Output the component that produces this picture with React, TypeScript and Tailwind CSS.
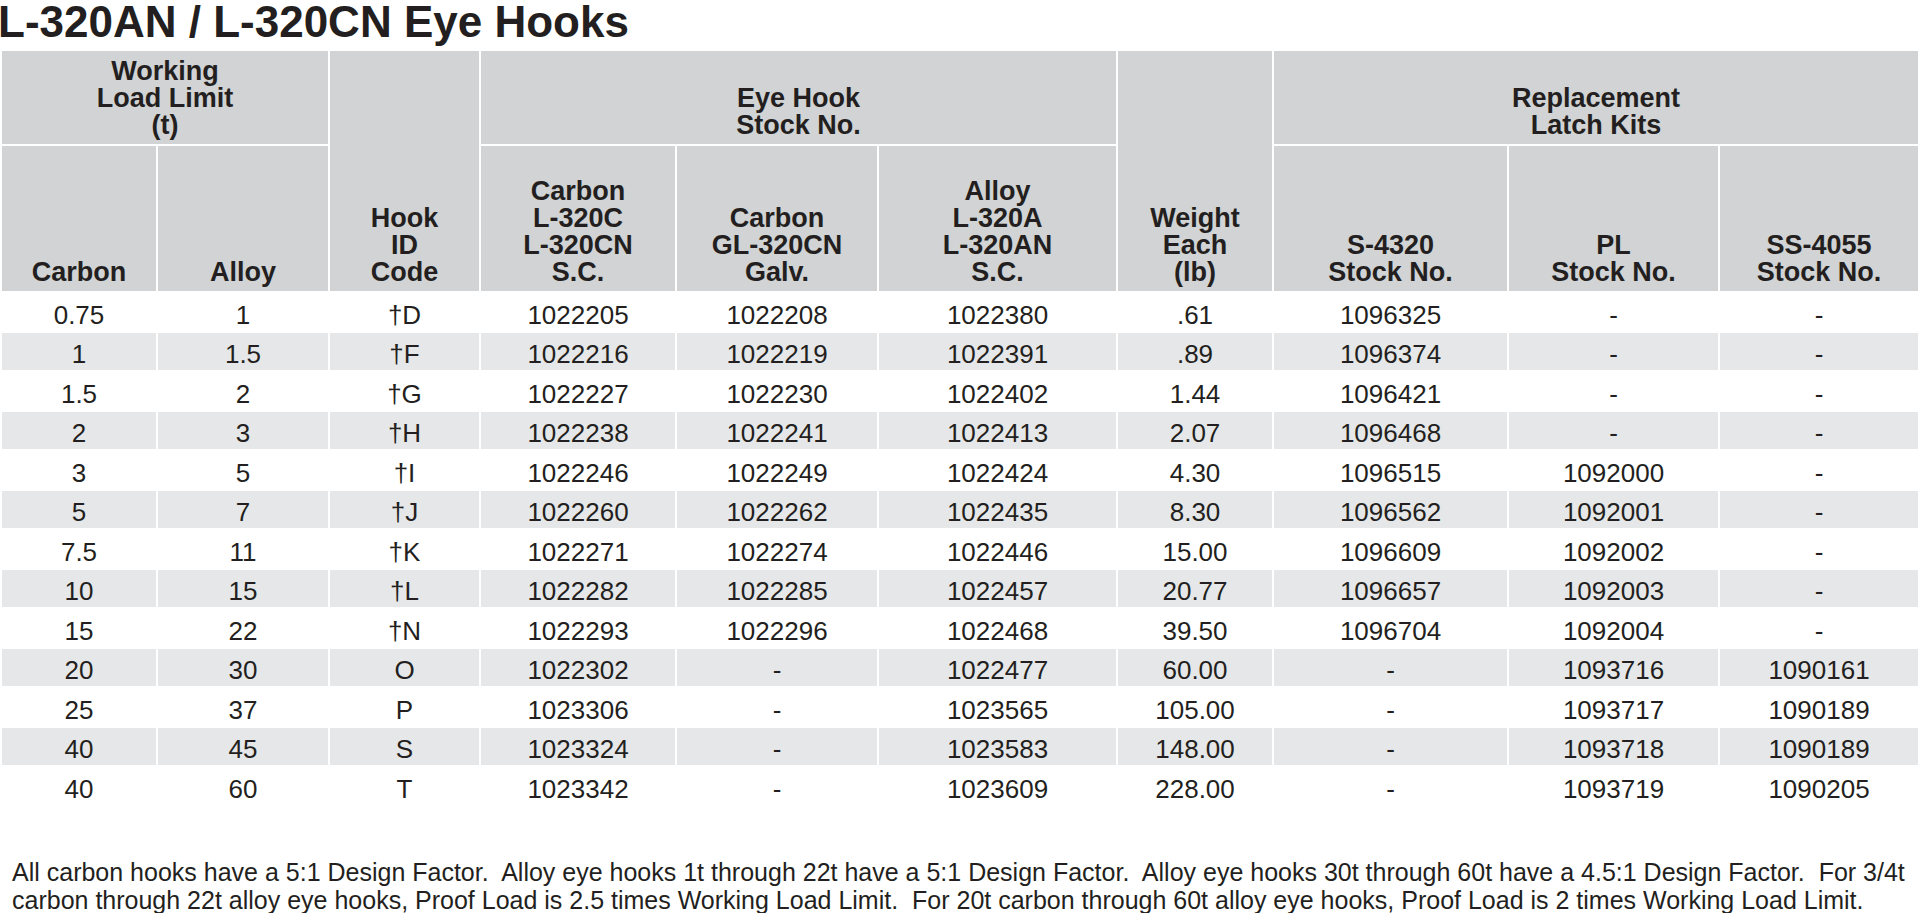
const rows: string[][] = [
  ["0.75", "1", "†D", "1022205", "1022208", "1022380", ".61", "1096325", "-", "-"],
  ["1", "1.5", "†F", "1022216", "1022219", "1022391", ".89", "1096374", "-", "-"],
  ["1.5", "2", "†G", "1022227", "1022230", "1022402", "1.44", "1096421", "-", "-"],
  ["2", "3", "†H", "1022238", "1022241", "1022413", "2.07", "1096468", "-", "-"],
  ["3", "5", "†I", "1022246", "1022249", "1022424", "4.30", "1096515", "1092000", "-"],
  ["5", "7", "†J", "1022260", "1022262", "1022435", "8.30", "1096562", "1092001", "-"],
  ["7.5", "11", "†K", "1022271", "1022274", "1022446", "15.00", "1096609", "1092002", "-"],
  ["10", "15", "†L", "1022282", "1022285", "1022457", "20.77", "1096657", "1092003", "-"],
  ["15", "22", "†N", "1022293", "1022296", "1022468", "39.50", "1096704", "1092004", "-"],
  ["20", "30", "O", "1022302", "-", "1022477", "60.00", "-", "1093716", "1090161"],
  ["25", "37", "P", "1023306", "-", "1023565", "105.00", "-", "1093717", "1090189"],
  ["40", "45", "S", "1023324", "-", "1023583", "148.00", "-", "1093718", "1090189"],
  ["40", "60", "T", "1023342", "-", "1023609", "228.00", "-", "1093719", "1090205"],
];

const th = "bg-[#d1d3d4] font-bold text-[27px] leading-[27px] text-center align-bottom pb-[5px] px-0";

function Lines({ items }: { items: string[] }) {
  return (
    <>
      {items.map((t) => (
        <div key={t}>{t}</div>
      ))}
    </>
  );
}

export default function App() {
  return (
    <div className="w-[1920px] h-[913px] bg-white text-[#231f20] font-['Liberation_Sans',Arial,sans-serif] overflow-hidden">
      <h1 className="text-[44px] leading-[43px] font-bold -ml-[2px] whitespace-nowrap">
        L-320AN / L-320CN Eye Hooks
      </h1>

      <table className="mt-[6px] w-[1920px] table-fixed border-separate border-spacing-[2px]">
        <colgroup>
          <col className="w-[154px]" />
          <col className="w-[170px]" />
          <col className="w-[149px]" />
          <col className="w-[194px]" />
          <col className="w-[200px]" />
          <col className="w-[237px]" />
          <col className="w-[154px]" />
          <col className="w-[233px]" />
          <col className="w-[209px]" />
          <col className="w-[198px]" />
        </colgroup>
        <thead>
          <tr className="h-[93px]">
            <th colSpan={2} className={th}>
              <Lines items={["Working", "Load Limit", "(t)"]} />
            </th>
            <th rowSpan={2} className={th}>
              <Lines items={["Hook", "ID", "Code"]} />
            </th>
            <th colSpan={3} className={th}>
              <Lines items={["Eye Hook", "Stock No."]} />
            </th>
            <th rowSpan={2} className={th}>
              <Lines items={["Weight", "Each", "(lb)"]} />
            </th>
            <th colSpan={3} className={th}>
              <Lines items={["Replacement", "Latch Kits"]} />
            </th>
          </tr>
          <tr className="h-[145px]">
            <th className={th}>Carbon</th>
            <th className={th}>Alloy</th>
            <th className={th}>
              <Lines items={["Carbon", "L-320C", "L-320CN", "S.C."]} />
            </th>
            <th className={th}>
              <Lines items={["Carbon", "GL-320CN", "Galv."]} />
            </th>
            <th className={th}>
              <Lines items={["Alloy", "L-320A", "L-320AN", "S.C."]} />
            </th>
            <th className={th}>
              <Lines items={["S-4320", "Stock No."]} />
            </th>
            <th className={th}>
              <Lines items={["PL", "Stock No."]} />
            </th>
            <th className={th}>
              <Lines items={["SS-4055", "Stock No."]} />
            </th>
          </tr>
        </thead>
        <tbody>
          {rows.map((r, i) => (
            <tr key={i} className="h-[37.5px]">
              {r.map((c, j) => (
                <td
                  key={j}
                  className={
                    "text-center align-middle text-[26px] leading-[30px] pt-[6px] pb-0 px-0 " +
                    (i % 2 === 1 ? "bg-[#e6e7e8]" : "bg-white")
                  }
                >
                  {c}
                </td>
              ))}
            </tr>
          ))}
        </tbody>
      </table>

      <p className="mt-[51px] pl-[12px] text-[25px] leading-[28px] whitespace-pre">
        {"All carbon hooks have a 5:1 Design Factor.  Alloy eye hooks 1t through 22t have a 5:1 Design Factor.  Alloy eye hooks 30t through 60t have a 4.5:1 Design Factor.  For 3/4t"}
        <br />
        {"carbon through 22t alloy eye hooks, Proof Load is 2.5 times Working Load Limit.  For 20t carbon through 60t alloy eye hooks, Proof Load is 2 times Working Load Limit."}
      </p>
    </div>
  );
}
